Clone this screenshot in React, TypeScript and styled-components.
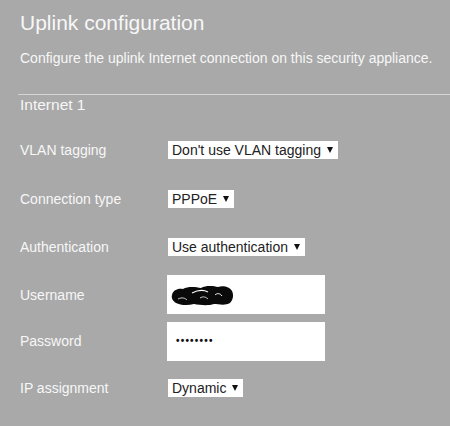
import * as React from 'react';
import styled, { createGlobalStyle } from 'styled-components';

const GlobalStyle = createGlobalStyle`
	html, body {
		margin: 0;
		padding: 0;
		background: #a9a9a9;
	}
	body {
		font-family: Arial, "Liberation Sans", sans-serif;
	}
`;

const Page = styled.div`
	width: 450px;
	height: 426px;
	overflow: hidden;
	background: #a9a9a9;
	color: #f7f7f7;
`;

const Header = styled.header`
	padding: 11px 0 0 20px;
`;

const Title = styled.h1`
	margin: 0;
	font-size: 21px;
	font-weight: normal;
	line-height: 24px;
`;

const Subtitle = styled.p`
	margin: 15px 0 0 0;
	font-size: 14px;
	line-height: 16px;
	white-space: nowrap;
`;

const Divider = styled.hr`
	margin: 28px 0 0 18px;
	border: 0;
	border-top: 1px solid #d4d4d4;
	height: 0;
`;

const SectionTitle = styled.h2`
	margin: 0;
	padding: 1px 20px 0 20px;
	font-size: 15.5px;
	font-weight: normal;
	line-height: 18px;
`;

const Form = styled.div`
	display: flex;
	flex-direction: column;
	padding: 11px 20px 0 20px;
`;

const Row = styled.div<{ $h: number }>`
	display: grid;
	grid-template-columns: 147px 1fr;
	align-items: center;
	height: ${p => p.$h}px;
`;

const Label = styled.label`
	font-size: 14px;
	line-height: 16px;
`;

const Select = styled.div`
	display: inline-flex;
	align-items: center;
	justify-self: start;
	height: 18px;
	padding: 0 5px 0 4px;
	margin-left: 1px;
	background: #fff;
	color: #222;
	font-size: 14px;
	line-height: 18px;
`;

const Caret = styled.span`
	width: 0;
	height: 0;
	margin-left: 6px;
	border-left: 3px solid transparent;
	border-right: 3px solid transparent;
	border-top: 6px solid #111;
`;

const Input = styled.div`
	display: flex;
	align-items: center;
	box-sizing: border-box;
	width: 158px;
	height: 39px;
	padding: 0 9px;
	background: #fff;
	color: #111;
`;

const Dots = styled.span`
	font-size: 10px;
	letter-spacing: 1.2px;
	font-weight: bold;
	line-height: 1;
`;

const Scribble = () => (
	<svg width="64" height="22" viewBox="0 0 64 22" style={{ marginLeft: -6 }}>
		<path
			d="M2 11 C3 6 8 4 13 5 C18 2 26 3 31 4 C36 1 44 2 48 3 C53 1 60 3 62 7 C64 11 63 16 60 19 C55 22 48 20 44 20 C38 22 30 21 24 20 C17 22 10 21 6 19 C3 17 1 14 2 11 Z"
			fill="#0a0a0a"
		/>
		<path d="M22 9 C28 6 34 6 38 8" stroke="#fff" strokeWidth="1.2" fill="none" />
		<path d="M45 11 C47 9 50 9 52 12" stroke="#fff" strokeWidth="1" fill="none" />
		<path d="M8 15 C12 13 15 14 17 16" stroke="#fff" strokeWidth="0.8" fill="none" />
		<path d="M30 14 C33 12 36 13 38 15" stroke="#fff" strokeWidth="0.8" fill="none" />
	</svg>
);

const Dropdown = ({ value }: { value: string }) => (
	<Select role="combobox">
		<span>{value}</span>
		<Caret />
	</Select>
);

export default function App() {
	return (
		<Page>
			<GlobalStyle />
			<Header>
				<Title>Uplink configuration</Title>
				<Subtitle>Configure the uplink Internet connection on this security appliance.</Subtitle>
			</Header>
			<Divider />
			<SectionTitle>Internet 1</SectionTitle>
			<Form>
				<Row $h={49}>
					<Label>VLAN tagging</Label>
					<Dropdown value="Don't use VLAN tagging" />
				</Row>
				<Row $h={49}>
					<Label>Connection type</Label>
					<Dropdown value="PPPoE" />
				</Row>
				<Row $h={48}>
					<Label>Authentication</Label>
					<Dropdown value="Use authentication" />
				</Row>
				<Row $h={47}>
					<Label>Username</Label>
					<Input>
						<Scribble />
					</Input>
				</Row>
				<Row $h={46}>
					<Label>Password</Label>
					<Input>
						<Dots>••••••••</Dots>
					</Input>
				</Row>
				<Row $h={47}>
					<Label>IP assignment</Label>
					<Dropdown value="Dynamic" />
				</Row>
			</Form>
		</Page>
	);
}
